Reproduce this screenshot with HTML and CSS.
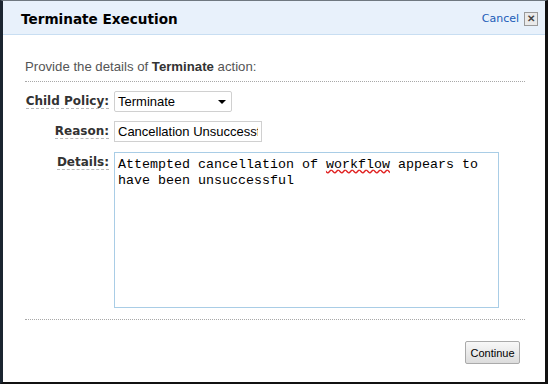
FILE: index.html
```html
<!DOCTYPE html>
<html lang="en">
<head>
    <meta charset="UTF-8">
    <title>Terminate Execution</title>
    <link rel="stylesheet" href="styles.css">
</head>
<body>
    <div class="dialog">
        <div class="dialog-header">
            <h1 class="dialog-title">Terminate Execution</h1>
            <div class="dialog-actions">
                <a class="cancel-link" href="#">Cancel</a>
                <span class="close-btn">&#x2715;</span>
            </div>
        </div>

        <div class="dialog-body">
            <p class="intro">Provide the details of <b>Terminate</b> action:</p>

            <div class="form-grid">
                <label class="field-label"><span>Child Policy:</span></label>
                <div class="select-box">
                    <span>Terminate</span>
                    <span class="select-arrow"></span>
                </div>

                <label class="field-label" for="reason"><span>Reason:</span></label>
                <input class="text-input" id="reason" type="text" value="Cancellation Unsuccessful">

                <label class="field-label details-label"><span>Details:</span></label>
                <div class="text-area">Attempted cancellation of <u class="misspelled">workflow</u> appears to have been unsuccessful</div>
            </div>

            <div class="dialog-footer">
                <button class="continue-btn" type="button">Continue</button>
            </div>
        </div>
    </div>
</body>
</html>
```

FILE: styles.css
```css
html, body {
    margin: 0;
    padding: 0;
    background: #000;
}

.dialog {
    box-sizing: border-box;
    width: 548px;
    height: 384px;
    background: #fff;
    border-left: 3px solid #1b2530;
    border-right: 3px solid #111;
    border-bottom: 2px solid #111;
    border-top: 1px solid #6f7880;
    font-family: "Liberation Sans", Arial, sans-serif;
}

/* Header bar */
.dialog-header {
    display: flex;
    align-items: center;
    justify-content: space-between;
    box-sizing: border-box;
    height: 34px;
    background: #e8f1fb;
    border-bottom: 1px solid #c8def2;
    padding: 2px 7px 0 18px;
}

.dialog-title {
    margin: 0;
    font-family: "DejaVu Sans", Verdana, sans-serif;
    font-size: 13.6px;
    font-weight: bold;
    color: #000;
}

.dialog-actions {
    display: flex;
    align-items: center;
    gap: 5px;
}

.cancel-link {
    font-family: "DejaVu Sans", Verdana, sans-serif;
    font-size: 11px;
    color: #1a5cb8;
    text-decoration: none;
}

.close-btn {
    display: inline-flex;
    align-items: center;
    justify-content: center;
    box-sizing: border-box;
    width: 14px;
    height: 14px;
    border: 1px solid #9a9a9a;
    background: #eaeaea;
    color: #444;
    font-size: 10px;
    font-weight: bold;
    line-height: 1;
}

/* Body */
.dialog-body {
    padding: 0 20px 0 22px;
}

.intro {
    margin: 24px 0 0;
    padding-bottom: 7px;
    border-bottom: 1px dotted #a8a8a8;
    font-size: 13.2px;
    color: #555;
}

.intro b {
    color: #333;
}

.form-grid {
    display: grid;
    grid-template-columns: 84px 1fr;
    column-gap: 5px;
    row-gap: 9px;
    padding: 9px 0 11px;
    border-bottom: 1px dotted #a8a8a8;
}

.field-label {
    text-align: right;
    font-family: "DejaVu Sans", Verdana, sans-serif;
    font-size: 12px;
    font-weight: bold;
    color: #333;
    padding-top: 3px;
}

.details-label {
    padding-top: 4px;
}

.field-label span {
    border-bottom: 1px dashed #b8b8b8;
}

.select-box {
    box-sizing: border-box;
    display: flex;
    align-items: center;
    justify-content: space-between;
    width: 118px;
    height: 21px;
    padding: 0 5px 0 3px;
    border: 1px solid #d0d0d0;
    border-radius: 2px;
    font-size: 13px;
    color: #000;
}

.select-arrow {
    width: 0;
    height: 0;
    border-left: 4px solid transparent;
    border-right: 4px solid transparent;
    border-top: 4px solid #000;
}

.text-input {
    box-sizing: border-box;
    width: 148px;
    height: 21px;
    margin: 0;
    padding: 1px 3px;
    border: 1px solid #d0d0d0;
    border-radius: 0;
    font-family: "Liberation Sans", Arial, sans-serif;
    font-size: 13px;
    color: #000;
    outline: none;
}

.text-area {
    box-sizing: border-box;
    width: 385px;
    height: 156px;
    margin-top: 1px;
    padding: 4px 3px;
    border: 1px solid #a9cde6;
    font-family: "Liberation Mono", "Courier New", monospace;
    font-size: 13.33px;
    line-height: 16px;
    color: #000;
}

.misspelled {
    text-decoration: underline wavy #e02020;
}

.dialog-footer {
    display: flex;
    justify-content: flex-end;
    padding: 21px 5px 0 0;
}

.continue-btn {
    height: 23px;
    width: 55px;
    padding: 0;
    border: 1px solid #aaa;
    border-radius: 2px;
    background: linear-gradient(#f8f8f8, #dcdcdc);
    font-family: "Liberation Sans", Arial, sans-serif;
    font-size: 11px;
    color: #000;
}
```
